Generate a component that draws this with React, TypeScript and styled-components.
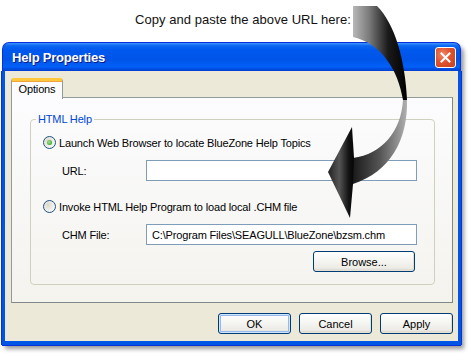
import { createGlobalStyle, styled } from "styled-components";

const GlobalStyle = createGlobalStyle`
  html, body {
    margin: 0;
    padding: 0;
    background: #ffffff;
  }
  body {
    font-family: "Liberation Sans", Arial, sans-serif;
  }
`;

const Page = styled.div`
  position: relative;
  width: 471px;
  height: 354px;
  overflow: hidden;
  background: #ffffff;
`;

const Caption = styled.div`
  height: 42px;
  box-sizing: border-box;
  padding: 12px 0 0 135px;
  font-family: "Liberation Sans", Arial, sans-serif;
  font-size: 13px;
  line-height: 15px;
  letter-spacing: 0.05px;
  color: #111;
`;

const Window = styled.div`
  margin-left: 2px;
  width: 459px;
  height: 303px;
  display: flex;
  flex-direction: column;
  border-radius: 7px 7px 0 0;
  box-shadow: 3px 4px 4px rgba(0, 0, 0, 0.4);
`;

const TitleBar = styled.div`
  height: 29px;
  flex-shrink: 0;
  display: flex;
  align-items: center;
  justify-content: space-between;
  padding: 0 4px 0 8px;
  border-radius: 7px 7px 0 0;
  border: 1px solid #0831d9;
  border-bottom: none;
  box-sizing: border-box;
  background: linear-gradient(
    to bottom,
    #3d95ff 0%,
    #0a66f0 10%,
    #0058ee 25%,
    #0055e8 60%,
    #0060f8 85%,
    #0048dc 95%,
    #003dd0 100%
  );
`;

const Title = styled.span`
  font-family: "Liberation Sans", Arial, sans-serif;
  font-weight: bold;
  font-size: 13px;
  color: #ffffff;
  letter-spacing: -0.2px;
  text-shadow: 1px 1px 0 #0a1883;
  margin-left: 1px;
`;

const CloseButton = styled.div`
  width: 21px;
  height: 21px;
  box-sizing: border-box;
  border: 1px solid #ffffff;
  border-radius: 3px;
  background: radial-gradient(circle at 35% 35%, #f08a6a 0%, #e0532f 45%, #c7401c 100%);
  display: flex;
  align-items: center;
  justify-content: center;
`;

const Body = styled.div`
  flex: 1;
  display: flex;
  flex-direction: column;
  background: #ece9d8;
  border: 3px solid #0055e5;
  border-top: none;
  border-bottom-width: 4px;
  box-shadow: -1px 0 0 #0831d9, 1px 0 0 #0831d9, 0 1px 0 #0831d9;
  padding: 7px 5px 0 6px;
`;

const TabStrip = styled.div`
  display: flex;
  height: 20px;
  position: relative;
  z-index: 1;
  margin-bottom: -1px;
`;

const Tab = styled.div`
  width: 52px;
  height: 21px;
  box-sizing: border-box;
  border: 1px solid #919b9c;
  border-top: 3px solid #ffc83c;
  border-bottom: none;
  border-radius: 3px 3px 0 0;
  background: #fcfcfe;
  font-size: 11px;
  letter-spacing: -0.15px;
  color: #000;
  display: flex;
  align-items: center;
  justify-content: center;
  padding-bottom: 2px;
  box-shadow: inset 0 1px 0 #f2a43c;
`;

const Panel = styled.div`
  width: 442px;
  height: 206px;
  box-sizing: border-box;
  border: 1px solid #919b9c;
  border-right-color: #7f8889;
  border-bottom-color: #7f8889;
  background: linear-gradient(to bottom, #fcfcfe, #f4f3ee);
  padding: 15px 17px 17px 18px;
  display: flex;
  flex-direction: column;
`;

const Group = styled.fieldset`
  flex: 1;
  margin: 0;
  padding: 0 17px 0 0;
  border: 1px solid #d0d0bf;
  border-radius: 4px;
  display: flex;
  flex-direction: column;
  min-width: 0;
`;

const Legend = styled.legend`
  margin-left: 5px;
  padding: 0 2px;
  font-size: 11px;
  line-height: 13px;
  letter-spacing: -0.15px;
  color: #0046d5;
`;

const RadioRow = styled.div<{ $top: number }>`
  display: flex;
  align-items: center;
  height: 15px;
  margin-top: ${({ $top }) => $top}px;
  padding-left: 12px;
  gap: 3px;
  font-size: 11px;
  letter-spacing: -0.16px;
  color: #000;
`;

const Radio = styled.span<{ $checked?: boolean }>`
  width: 13px;
  height: 13px;
  box-sizing: border-box;
  border-radius: 50%;
  border: 1px solid #1c5180;
  background: radial-gradient(circle at 35% 35%, #dcd8cc 0%, #ffffff 90%);
  display: flex;
  align-items: center;
  justify-content: center;

  &::after {
    content: "";
    display: ${({ $checked }) => ($checked ? "block" : "none")};
    width: 5px;
    height: 5px;
    border-radius: 50%;
    background: radial-gradient(circle at 40% 40%, #a6e297 0%, #4db63c 60%, #21a121 100%);
  }
`;

const FieldRow = styled.div<{ $top: number }>`
  display: flex;
  align-items: center;
  margin-top: ${({ $top }) => $top}px;
  padding-left: 31px;
  letter-spacing: -0.16px;
`;

const FieldLabel = styled.span`
  width: 84px;
  font-size: 11px;
  color: #000;
`;

const TextBox = styled.div`
  width: 271px;
  height: 21px;
  box-sizing: border-box;
  border: 1px solid #7f9db9;
  background: #ffffff;
  font-size: 11px;
  color: #000;
  padding-left: 5px;
  display: flex;
  align-items: center;
`;

const BrowseRow = styled.div`
  display: flex;
  justify-content: flex-end;
  margin-top: 6px;
  padding-right: 2px;
`;

const Button = styled.div<{ $width: number; $default?: boolean }>`
  width: ${({ $width }) => $width}px;
  height: 21px;
  box-sizing: border-box;
  border: 1px solid #003c74;
  border-radius: 3px;
  background: linear-gradient(to bottom, #ffffff 0%, #f4f4f0 50%, #ecebe6 85%, #d6d0c5 100%);
  font-size: 11px;
  color: #000;
  display: flex;
  align-items: center;
  justify-content: center;
  box-shadow: ${({ $default }) =>
    $default
      ? "inset 0 0 0 1px #cee7ff, inset 0 0 0 2px #98b8ea"
      : "inset -1px -1px 0 #e3e0d5"};
`;

const ButtonBar = styled.div`
  display: flex;
  justify-content: flex-end;
  gap: 8px;
  margin-top: 10px;
`;

const ArrowLayer = styled.svg`
  position: absolute;
  left: 0;
  top: 0;
  pointer-events: none;
`;

const CurvedArrow = () => (
  <ArrowLayer width="471" height="354" viewBox="0 0 471 354">
    <defs>
      <linearGradient id="upper" x1="353" y1="0" x2="407" y2="0" gradientUnits="userSpaceOnUse">
        <stop offset="0" stopColor="#b8b8b8" />
        <stop offset="0.3" stopColor="#7a7a7a" />
        <stop offset="0.65" stopColor="#1a1a1a" />
        <stop offset="1" stopColor="#000" />
      </linearGradient>
      <linearGradient id="lower" x1="353" y1="0" x2="407" y2="0" gradientUnits="userSpaceOnUse">
        <stop offset="0" stopColor="#1a1a1a" />
        <stop offset="0.5" stopColor="#555" />
        <stop offset="1" stopColor="#b0b0b0" />
      </linearGradient>
      <linearGradient id="head" x1="328" y1="0" x2="356" y2="0" gradientUnits="userSpaceOnUse">
        <stop offset="0" stopColor="#222" />
        <stop offset="0.4" stopColor="#555" />
        <stop offset="0.75" stopColor="#111" />
        <stop offset="1" stopColor="#000" />
      </linearGradient>
    </defs>
    <path d="M353,6 L377,6 C395,24 405,60 407,100 L403,100 C398,70 382,44 353,37 Z" fill="url(#upper)" />
    <path d="M403,100 L407,100 C408,140 390,172 353,184 L353,158 C382,154 401,132 403,100 Z" fill="url(#lower)" />
    <path d="M352,127 L354,158 L353,184 L350,218 L328,172 Z" fill="url(#head)" />
  </ArrowLayer>
);

export default function App() {
  return (
    <Page>
      <GlobalStyle />
      <Caption>Copy and paste the above URL here:</Caption>
      <Window>
        <TitleBar>
          <Title>Help Properties</Title>
          <CloseButton>
            <svg width="11" height="11" viewBox="0 0 11 11">
              <path d="M1.5,1.5 L9.5,9.5 M9.5,1.5 L1.5,9.5" stroke="#fff" strokeWidth="2" strokeLinecap="square" />
            </svg>
          </CloseButton>
        </TitleBar>
        <Body>
          <TabStrip>
            <Tab>Options</Tab>
          </TabStrip>
          <Panel>
            <Group>
              <Legend>HTML Help</Legend>
              <RadioRow $top={9}>
                <Radio $checked />
                <span>Launch Web Browser to locate BlueZone Help Topics</span>
              </RadioRow>
              <FieldRow $top={10}>
                <FieldLabel>URL:</FieldLabel>
                <TextBox />
              </FieldRow>
              <RadioRow $top={18}>
                <Radio />
                <span>Invoke HTML Help Program to load local .CHM file</span>
              </RadioRow>
              <FieldRow $top={10}>
                <FieldLabel>CHM File:</FieldLabel>
                <TextBox>C:\Program Files\SEAGULL\BlueZone\bzsm.chm</TextBox>
              </FieldRow>
              <BrowseRow>
                <Button $width={102}>Browse...</Button>
              </BrowseRow>
            </Group>
          </Panel>
          <ButtonBar>
            <Button $width={73} $default>OK</Button>
            <Button $width={73}>Cancel</Button>
            <Button $width={73}>Apply</Button>
          </ButtonBar>
        </Body>
      </Window>
      <CurvedArrow />
    </Page>
  );
}
